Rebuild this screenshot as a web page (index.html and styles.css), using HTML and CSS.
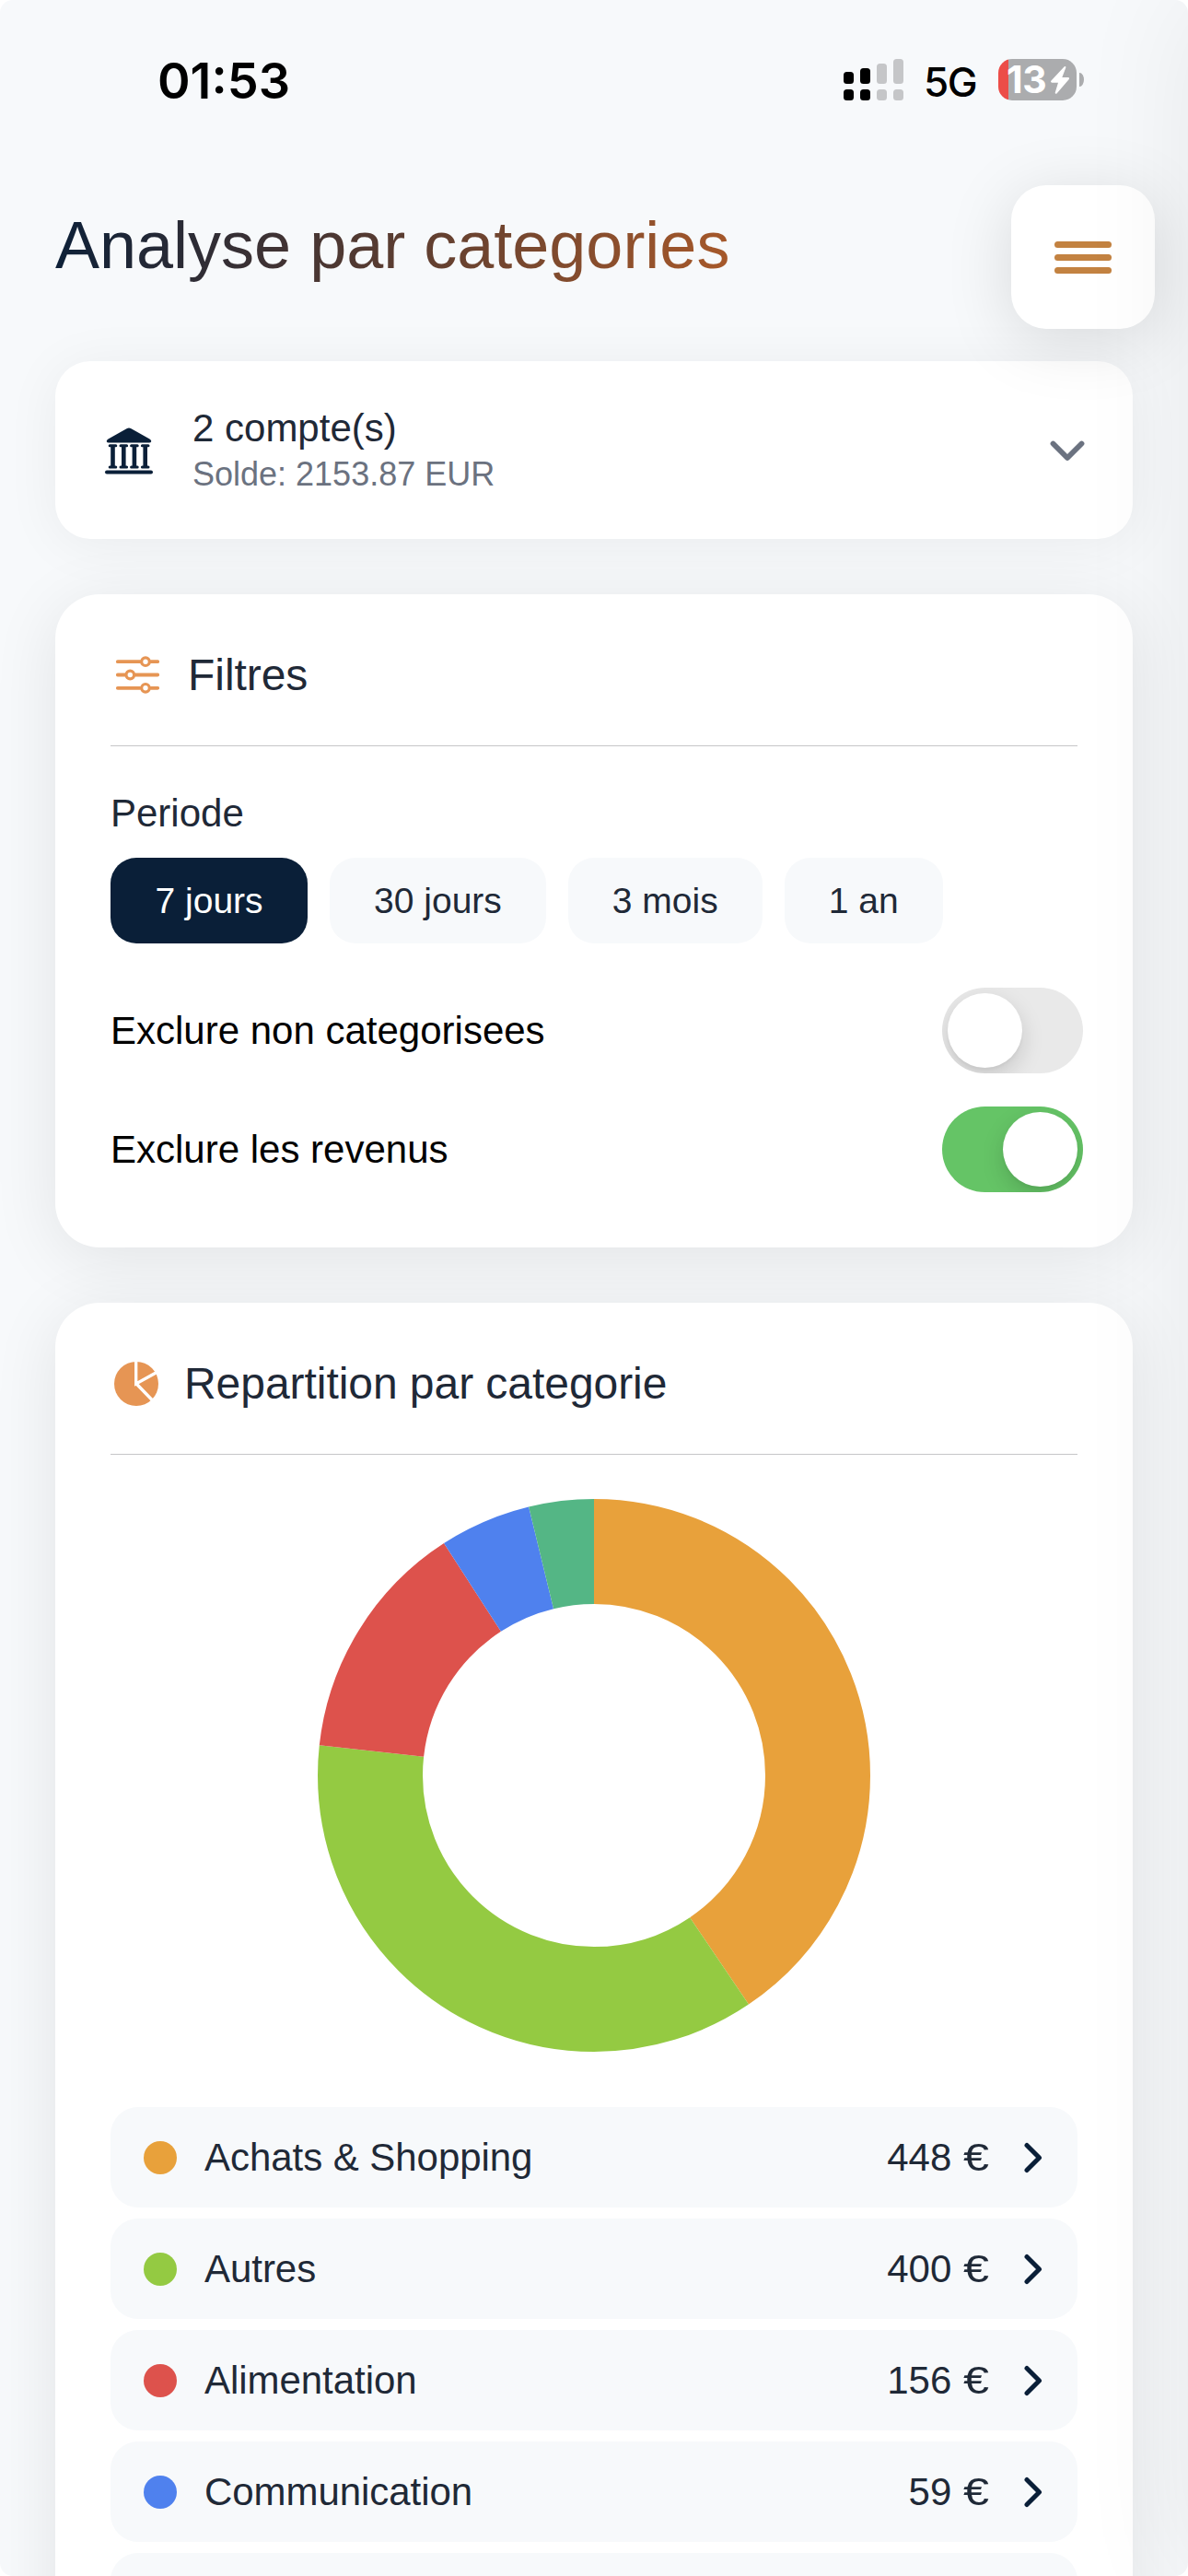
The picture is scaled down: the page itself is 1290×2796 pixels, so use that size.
FILE: index.html
```html
<!DOCTYPE html>
<html lang="fr">
<head>
<meta charset="utf-8">
<title>Analyse par categories</title>
<link rel="stylesheet" href="styles.css">
</head>
<body>
<div class="screen">
  <header class="status">
    <span class="time">01:53</span>
    <div class="status-right">
      <svg class="signal" width="65" height="45" viewBox="0 0 65 45">
        <g fill="#000"><rect x="0" y="14" width="11" height="13" rx="3.5"/><rect x="18" y="10" width="11" height="17" rx="3.5"/><rect x="0" y="33" width="11" height="12" rx="3.5"/><rect x="18" y="33" width="11" height="12" rx="3.5"/></g>
        <g fill="#c5c6c8"><rect x="36" y="5" width="11" height="22" rx="3.5"/><rect x="54" y="0" width="11" height="27" rx="3.5"/><rect x="36" y="33" width="11" height="12" rx="3.5"/><rect x="54" y="33" width="11" height="12" rx="3.5"/></g>
      </svg>
      <span class="network">5G</span>
      <div class="battery">
        <div class="battery-body">
          <span class="battery-level">13</span>
          <svg class="bolt" width="20" height="30" viewBox="0 0 20 30"><path d="M14.500.5.5 15.500C-.3 16.500 0 17.700 1.400 17.700H8L4.800 28.200c-.5 1.500.8 2.200 1.900 1.100L19.600 14.200c.8-1 .4-2.200-1-2.200H12.300L16.200 1.800C16.800.2 15.600-.6 14.500.5z" fill="#fff"/></svg>
        </div>
        <div class="battery-nub"></div>
      </div>
    </div>
  </header>

  <main class="content">
    <h1 class="title">Analyse par categories</h1>

    <section class="card account">
      <svg class="bank" width="54" height="54" viewBox="0 0 54 54" fill="#0a1f38">
        <path d="M24.500 3.200Q27 1.800 29.500 3.200L49.500 14.600Q51.800 16 51.200 17.300 50.800 18.600 49 18.600H5Q3.200 18.600 2.800 17.300 2.200 16 4.500 14.600z"/>
        <g id="columns">
          <path d="M7.200 22H11.800V44.500H7.200zM19 22h4.600V44.500H19zM30.600 22h4.600V44.500H30.600zM42.400 22H47V44.500H42.400z"/>
          <path d="M6.200 21.800H12.800M18 21.800H24.600M29.600 21.800H36.200M41.400 21.800H48M6.200 45H12.800M18 45H24.600M29.600 45H36.200M41.400 45H48" stroke="#0a1f38" stroke-width="3" stroke-linecap="round"/>
        </g>
        <rect x="1" y="48.500" width="52" height="4" rx="2"/>
      </svg>
      <div class="account-text">
        <div class="account-name">2 compte(s)</div>
        <div class="account-balance">Solde: 2153.87 EUR</div>
      </div>
      <svg class="chevron-down" width="38" height="24" viewBox="0 0 38 24"><path d="M3.500 4.500 19 20 34.500 4.500" fill="none" stroke="#6b7280" stroke-width="5.800" stroke-linecap="round" stroke-linejoin="round"/></svg>
    </section>

    <section class="card panel filters">
      <div class="panel-head head-filters">
        <svg width="48" height="42" viewBox="0 0 48 42" fill="none" stroke="#e69554" stroke-width="3.800" stroke-linecap="round">
          <path d="M2.800 6.200H27M39 6.200H46.200M2.800 20.500H10.500M22 20.500H46.200M2.800 34.800H27M39 34.800H46.200"/>
          <circle cx="33" cy="6.200" r="4.300" stroke-width="3.200"/><circle cx="16.300" cy="20.500" r="4.300" stroke-width="3.200"/><circle cx="33" cy="34.800" r="4.300" stroke-width="3.200"/>
        </svg>
        <h2>Filtres</h2>
      </div>
      <div class="period">Periode</div>
      <div class="chips">
        <button class="chip active">7 jours</button><button class="chip">30 jours</button><button class="chip">3 mois</button><button class="chip">1 an</button>
      </div>
      <div class="option"><span>Exclure non categorisees</span><div class="switch"><div class="thumb"></div></div></div>
      <div class="option"><span>Exclure les revenus</span><div class="switch on"><div class="thumb"></div></div></div>
    </section>

    <section class="card panel breakdown">
      <div class="panel-head head-pie">
        <svg width="48" height="48" viewBox="0 0 48 48">
          <circle cx="24" cy="24" r="24" fill="#e69554"/>
          <path d="M23.700 -2V24L48 10.500M23.700 23.500 43 43.500" fill="none" stroke="#fff" stroke-width="3.300"/>
        </svg>
        <h2>Repartition par categorie</h2>
      </div>
      <svg class="donut" width="600" height="600" viewBox="0 0 600 600">
        <g transform="rotate(-90 300 300)" fill="none" stroke-width="114">
          <circle cx="300" cy="300" r="243" pathLength="1105" stroke="#e8a13b" stroke-dasharray="448 657"/>
          <circle cx="300" cy="300" r="243" pathLength="1105" stroke="#94ca42" stroke-dasharray="400 705" stroke-dashoffset="-448"/>
          <circle cx="300" cy="300" r="243" pathLength="1105" stroke="#dd524c" stroke-dasharray="156 949" stroke-dashoffset="-848"/>
          <circle cx="300" cy="300" r="243" pathLength="1105" stroke="#4f81ee" stroke-dasharray="59 1046" stroke-dashoffset="-1004"/>
          <circle cx="300" cy="300" r="243" pathLength="1105" stroke="#54b685" stroke-dasharray="42 1063" stroke-dashoffset="-1063"/>
        </g>
      </svg>
      <div class="legend">
        <div class="row"><i class="dot orange"></i><span class="label">Achats &amp; Shopping</span><span class="amount">448 <span class="euro">€</span></span><svg class="go" width="20" height="34" viewBox="0 0 20 34"><path d="M3 3.500 16.500 17 3 30.500"/></svg></div>
        <div class="row"><i class="dot green"></i><span class="label">Autres</span><span class="amount">400 <span class="euro">€</span></span><svg class="go" width="20" height="34" viewBox="0 0 20 34"><path d="M3 3.500 16.500 17 3 30.500"/></svg></div>
        <div class="row"><i class="dot red"></i><span class="label">Alimentation</span><span class="amount">156 <span class="euro">€</span></span><svg class="go" width="20" height="34" viewBox="0 0 20 34"><path d="M3 3.500 16.500 17 3 30.500"/></svg></div>
        <div class="row"><i class="dot blue"></i><span class="label">Communication</span><span class="amount">59 <span class="euro">€</span></span><svg class="go" width="20" height="34" viewBox="0 0 20 34"><path d="M3 3.500 16.500 17 3 30.500"/></svg></div>
        <div class="row"></div>
      </div>
    </section>
  </main>

  <button class="menu" aria-label="Menu"><i></i><i></i><i></i></button>
  <div class="drawer"></div>
</div>
</body>
</html>
```
FILE: styles.css
```css
* { box-sizing: border-box; }
html, body { margin: 0; height: 2796px; overflow: hidden; background: #fff; }
body { font-family: "Liberation Sans", Arial, sans-serif; color: #1f2937; }
h1, h2 { margin: 0; font-weight: 400; }
button { border: 0; padding: 0; font: inherit; }
svg { display: block; flex: none; }

.screen { position: relative; width: 1290px; height: 2796px; overflow: hidden; border-radius: 14px; background: #f7f9fb; }

.status { display: flex; justify-content: space-between; height: 177px; padding: 64px 113px 0 171px; font-family: Inter, sans-serif; color: #000; }
.time { font-size: 54px; font-weight: 600; line-height: 46px; margin-top: 1px; letter-spacing: 0; }
.status-right { display: flex; align-items: flex-start; }
.network { margin: 3px 0 0 22px; width: 81px; font-size: 44px; font-weight: 450; line-height: 45px; letter-spacing: -1.5px; }
.battery { display: flex; align-items: center; gap: 3px; }
.battery-body { display: flex; align-items: center; width: 85px; height: 45px; padding-left: 9px; border-radius: 15px; background: linear-gradient(90deg, #ec4d48 11px, #abacae 11px); }
.battery-level { width: 48px; color: #fff; font-size: 41px; font-weight: 700; line-height: 45px; letter-spacing: -0.5px; }
.battery-nub { width: 5px; height: 15px; border-radius: 0 5px 5px 0 / 0 8px 8px 0; background: #abacae; }

.content { display: flex; flex-direction: column; gap: 60px; padding: 0 60px; }
.title { align-self: flex-start; height: 155px; padding-top: 49px; font-size: 72px; line-height: 80px; background: linear-gradient(100deg, #0a1f38, #a8592a); -webkit-background-clip: text; background-clip: text; color: transparent; }

.card { background: #fff; border-radius: 48px; }
.account { display: flex; align-items: center; height: 193px; padding: 0 52px 0 53px; border-radius: 38px; box-shadow: 0 6px 60px rgba(0, 0, 0, .06); }
.account-text { flex: 1; margin-left: 42px; padding-top: 3px; }
.account-name { font-size: 42px; line-height: 50px; }
.account-balance { font-size: 36px; line-height: 50px; color: #6b7280; }

.panel { padding: 60px; box-shadow: 0 12px 72px rgba(0, 0, 0, .09); }
.filters { height: 709px; }
.panel-head { display: flex; align-items: center; height: 105px; border-bottom: 1px solid #c6c6c8; padding-bottom: 48px; }
.panel-head h2 { font-size: 48px; line-height: 56px; letter-spacing: -0.05px; }
.head-filters { padding-left: 5px; gap: 31px; }
.head-pie { padding-left: 4px; gap: 28px; }
.period { margin-top: 48px; font-size: 42px; line-height: 50px; }
.chips { display: flex; gap: 24px; margin-top: 23px; }
.chip { height: 93px; padding: 0 48px; border-radius: 28px; background: #f7f9fb; color: #1f2937; font-size: 39px; }
.chip.active { padding: 0 48.5px; background: #0a1f38; color: #fff; }
.option { display: flex; align-items: center; justify-content: space-between; height: 93px; margin: 48px -6px 0 0; font-size: 42px; color: #000; }
.option + .option { margin-top: 36px; }
.switch { display: flex; width: 153px; height: 93px; padding: 6px; border-radius: 47px; background: #e9e9e9; overflow: hidden; }
.switch.on { justify-content: flex-end; background: #65c466; }
.thumb { width: 81px; height: 81px; border-radius: 50%; background: #fff; box-shadow: 0 9px 24px rgba(0, 0, 0, .15), 0 3px 3px rgba(0, 0, 0, .03); }

.breakdown { height: 1500px; flex: none; }
.donut { margin: 48px auto 0; }
.legend { display: flex; flex-direction: column; gap: 12px; margin-top: 60px; }
.row { display: flex; align-items: center; height: 109px; padding: 0 38px 0 36px; border-radius: 30px; background: #f7f9fb; font-size: 42px; }
.dot { width: 36px; height: 36px; border-radius: 50%; }
.orange { background: #e8a13b; }
.green { background: #94ca42; }
.red { background: #dd524c; }
.blue { background: #4f81ee; }
.label { flex: 1; margin-left: 30px; letter-spacing: -0.05px; }
.euro { display: inline-block; width: 29px; margin-left: 1px; transform: scaleX(1.2); transform-origin: left; }
.go { margin-left: 37px; fill: none; stroke: #0a1f38; stroke-width: 5px; stroke-linecap: round; stroke-linejoin: round; }

/* floating menu button */
.menu { position: absolute; top: 201px; left: 1098px; display: flex; flex-direction: column; align-items: center; justify-content: center; gap: 7px; width: 156px; height: 156px; border-radius: 38px; background: #fff; box-shadow: 0 12px 72px rgba(0, 0, 0, .13); }
.menu i { width: 62px; height: 7px; border-radius: 4px; background: #c38241; }

/* closed side drawer, only its shadow reaches the screen */
.drawer { position: absolute; top: 0; bottom: 0; left: 1290px; width: 800px; box-shadow: 0 0 120px rgba(0, 0, 0, .07); pointer-events: none; }
```
